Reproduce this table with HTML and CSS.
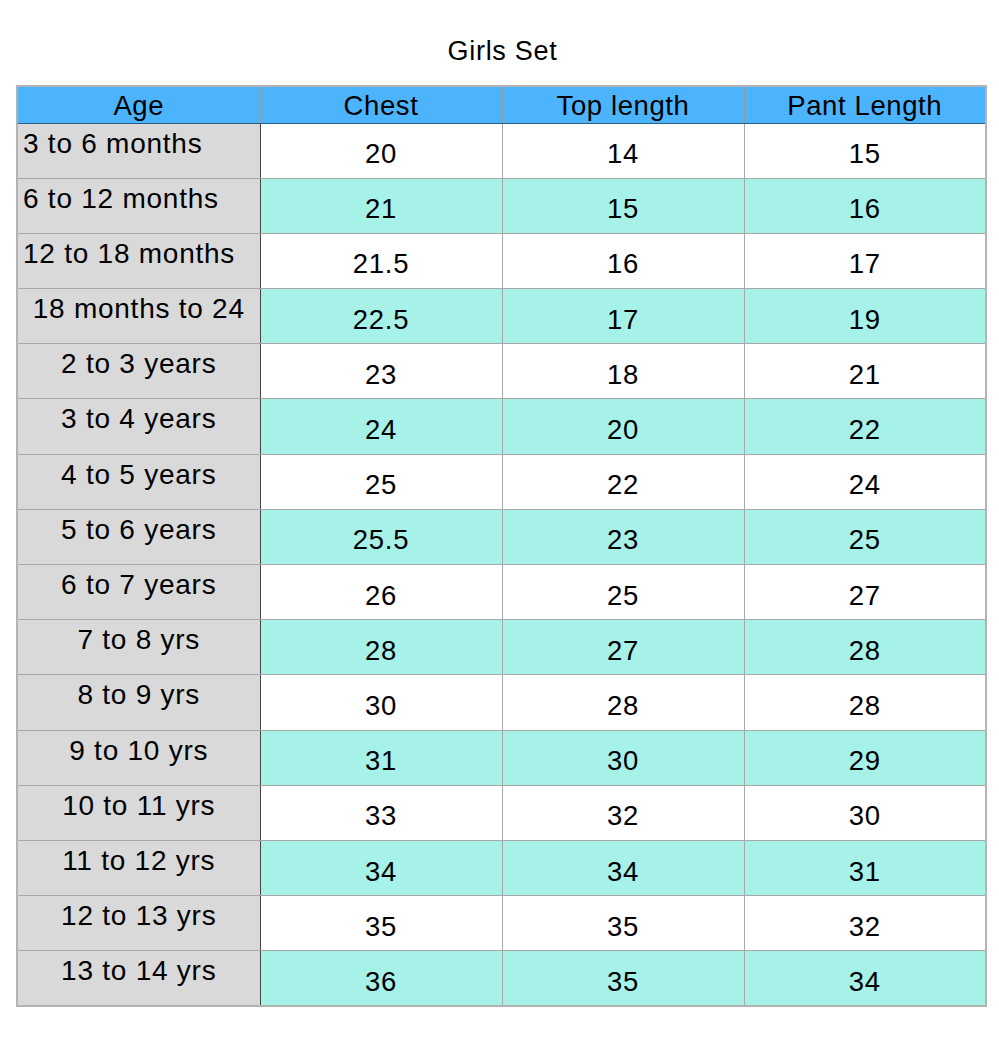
FILE: index.html
```html
<!DOCTYPE html>
<html lang="en">
<head>
<meta charset="utf-8">
<title>Girls Set</title>
<link rel="stylesheet" href="styles.css">
</head>
<body>
<div class="page">
  <h1 class="title">Girls Set</h1>
  <table class="size-table">
    <colgroup>
      <col class="c-age"><col class="c-num"><col class="c-num"><col class="c-num">
    </colgroup>
    <thead>
      <tr><th>Age</th><th>Chest</th><th>Top length</th><th>Pant Length</th></tr>
    </thead>
    <tbody>
      <tr><td class="age left">3 to 6 months</td><td>20</td><td>14</td><td>15</td></tr>
      <tr class="alt"><td class="age left">6 to 12 months</td><td>21</td><td>15</td><td>16</td></tr>
      <tr><td class="age left">12 to 18 months</td><td>21.5</td><td>16</td><td>17</td></tr>
      <tr class="alt"><td class="age">18 months to 24</td><td>22.5</td><td>17</td><td>19</td></tr>
      <tr><td class="age">2 to 3 years</td><td>23</td><td>18</td><td>21</td></tr>
      <tr class="alt"><td class="age">3 to 4 years</td><td>24</td><td>20</td><td>22</td></tr>
      <tr><td class="age">4 to 5 years</td><td>25</td><td>22</td><td>24</td></tr>
      <tr class="alt"><td class="age">5 to 6 years</td><td>25.5</td><td>23</td><td>25</td></tr>
      <tr><td class="age">6 to 7 years</td><td>26</td><td>25</td><td>27</td></tr>
      <tr class="alt"><td class="age">7 to 8 yrs</td><td>28</td><td>27</td><td>28</td></tr>
      <tr><td class="age">8 to 9 yrs</td><td>30</td><td>28</td><td>28</td></tr>
      <tr class="alt"><td class="age">9 to 10 yrs</td><td>31</td><td>30</td><td>29</td></tr>
      <tr><td class="age">10 to 11 yrs</td><td>33</td><td>32</td><td>30</td></tr>
      <tr class="alt"><td class="age">11 to 12 yrs</td><td>34</td><td>34</td><td>31</td></tr>
      <tr><td class="age">12 to 13 yrs</td><td>35</td><td>35</td><td>32</td></tr>
      <tr class="alt"><td class="age">13 to 14 yrs</td><td>36</td><td>35</td><td>34</td></tr>
    </tbody>
  </table>
</div>
</body>
</html>
```

FILE: styles.css
```css
* { box-sizing: border-box; }

html, body {
  margin: 0;
  padding: 0;
  background: #ffffff;
}

body {
  font-family: "Liberation Sans", Arial, Helvetica, sans-serif;
  color: #000000;
}

.page {
  width: 999px;
  height: 1060px;
  padding: 36px 14px 0 16px;
}

.title {
  margin: 0;
  height: 49px;
  font-size: 27px;
  font-weight: normal;
  letter-spacing: 0.7px;
  line-height: 30px;
  text-align: center;
  padding-left: 4px;
}

.size-table {
  width: 969px;
  border-collapse: collapse;
  table-layout: fixed;
  border: 2px solid #b3b3b3;
}

.c-age { width: 243px; }
.c-num { width: 242px; }

.size-table th {
  height: 37px;
  padding: 2px 0 0;
  background: #4cb4fc;
  font-size: 27.5px;
  font-weight: normal;
  letter-spacing: 0.6px;
  line-height: 30px;
  text-align: center;
  vertical-align: middle;
  border-left: 1px solid #9a9a9a;
  border-right: 1px solid #9a9a9a;
  border-bottom: 1px solid #2a5f80;
}

.size-table td {
  height: 55.2px;
  padding: 7px 0 0;
  background: #ffffff;
  font-size: 27.5px;
  letter-spacing: 0.8px;
  line-height: 30px;
  text-align: center;
  vertical-align: middle;
  border: 1px solid #a8a8a8;
}

.size-table tr.alt td {
  background: #a6f2e9;
}

.size-table td.age {
  background: #d9d9d9;
  vertical-align: top;
  padding-top: 5px;
  padding-right: 0;
  font-size: 28px;
  letter-spacing: 0.75px;
  border-right: 1px solid #444444;
}

.size-table tr.alt td.age {
  background: #d9d9d9;
}

.size-table td.age.left {
  text-align: left;
  padding-left: 5px;
}
```
